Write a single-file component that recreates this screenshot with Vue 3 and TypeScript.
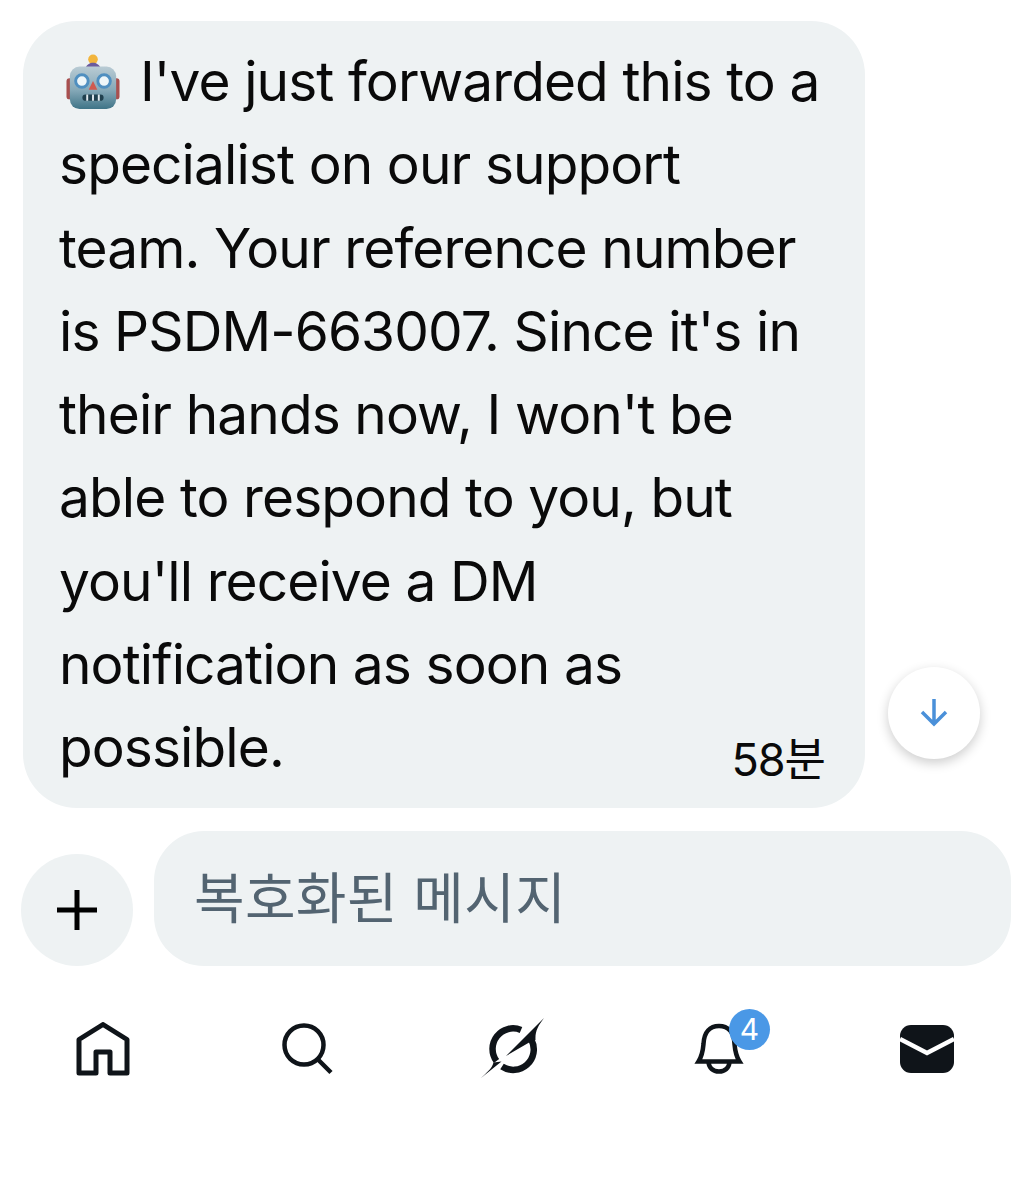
<template>
  <div class="screen">
    <div class="thread">
      <div class="bubble">
        <div class="line first">
          <svg class="robot" viewBox="0 0 56 58" aria-hidden="true">
            <defs>
              <linearGradient id="face" x1="0" y1="0" x2="0" y2="1">
                <stop offset="0" stop-color="#b9cbd4" />
                <stop offset="0.55" stop-color="#86a9b8" />
                <stop offset="1" stop-color="#3f7487" />
              </linearGradient>
            </defs>
            <rect x="0.500" y="25" width="7" height="22" rx="3" fill="#a8504f" />
            <rect x="48.500" y="25" width="7" height="22" rx="3" fill="#a8504f" />
            <circle cx="28" cy="5.500" r="5" fill="#f2b53c" />
            <path d="M20 15c1-4 5-6 8-6s7 2 8 6z" fill="#6a5a9c" />
            <rect x="4" y="13" width="48" height="44" rx="10" fill="url(#face)" />
            <circle cx="16.500" cy="28" r="6.500" fill="#eef6f9" stroke="#4f8fc0" stroke-width="3" />
            <circle cx="39.500" cy="28" r="6.500" fill="#eef6f9" stroke="#4f8fc0" stroke-width="3" />
            <path d="M28 28l4.500 9h-9z" fill="#cf5a50" />
            <rect x="17" y="42" width="22" height="6.500" rx="3.200" fill="#20404e" />
            <path d="M22 42v6.500M28 42v6.500M34 42v6.500" stroke="#dfe9ee" stroke-width="2" />
          </svg>
          <span>{{ firstLine }}</span>
        </div>
        <div v-for="text in lines" :key="text" class="line">{{ text }}</div>
        <div class="line last">
          <span>possible.</span>
          <span class="time">58분</span>
        </div>
      </div>
      <button class="scroll-down" aria-label="scroll down">
        <svg viewBox="0 0 28 30" width="28" height="30" fill="none" stroke="#4a90d9" stroke-width="3.500">
          <path d="M14 1v25M2 14l12 12 12-12" />
        </svg>
      </button>
    </div>

    <div class="composer">
      <button class="add" aria-label="add">
        <svg viewBox="0 0 42 42" width="42" height="42" stroke="#000" stroke-width="5">
          <path d="M21 1v40M1 21h40" />
        </svg>
      </button>
      <div class="input">복호화된 메시지</div>
    </div>

    <nav class="tabs">
      <a class="tab">
        <svg viewBox="0 0 54 54" width="54" height="54" fill="none" stroke="#0f1419" stroke-width="5" stroke-linejoin="round">
          <path d="M3 17.500 27 2.500l24 15V51H34V30H20v21H3z" />
        </svg>
      </a>
      <a class="tab">
        <svg class="nudge" viewBox="0 0 54 54" width="54" height="54" fill="none" stroke="#0f1419" stroke-width="4.500">
          <circle cx="24" cy="23" r="19.500" />
          <path d="M37 36.500l14 14" />
        </svg>
      </a>
      <a class="tab">
        <svg class="nudge" viewBox="0 0 66 66" width="66" height="66">
          <g fill="none" stroke="#0f1419" stroke-width="6.500">
            <path d="M41 14A20.500 20.500 0 0 0 16.500 45" />
            <path d="M22 50.500A20.500 20.500 0 0 0 51.500 24" />
          </g>
          <g fill="#0f1419">
            <path d="M64 2C58 10 55 15 55.500 24L50 26 26 40z" />
            <path d="M1 62C6 57 12 53 13.500 46.500L21.500 45.500z" />
          </g>
        </svg>
      </a>
      <a class="tab">
        <svg class="nudge" viewBox="0 0 50 54" width="50" height="54" fill="none" stroke="#0f1419" stroke-width="4.500">
          <path d="M4.500 39.500C8 34 9 28 9.500 22 10 10 16 4 25 4s15 6 15.500 18c.5 6 1.500 12 5 17.500z" />
          <path d="M14.500 40c.5 6 4.500 9.500 10.500 9.500S35 46 35.500 40" />
        </svg>
        <span class="badge">4</span>
      </a>
      <a class="tab">
        <svg viewBox="0 0 54 48" width="54" height="48">
          <rect width="54" height="48" rx="11" fill="#0f1419" />
          <path d="M0 14l27 14 27-14" fill="none" stroke="#fff" stroke-width="4.500" />
        </svg>
      </a>
    </nav>
  </div>
</template>

<script setup lang="ts">
const firstLine = "I've just forwarded this to a"

const lines: string[] = [
  'specialist on our support',
  'team. Your reference number',
  "is PSDM-663007. Since it's in",
  "their hands now, I won't be",
  'able to respond to you, but',
  "you'll receive a DM",
  'notification as soon as',
]
</script>

<style>
html,
body {
  background: #fff;
}
</style>

<style scoped>
.screen {
  width: 1032px;
  height: 1200px;
  overflow: hidden;
  font-family: Inter, "Liberation Sans", "Noto Sans CJK KR", sans-serif;
  color: #0a0a0a;
  background: #fff;
}
.thread {
  position: relative;
  padding: 21px 0 0 23px;
}
.bubble {
  width: 842px;
  height: 787px;
  box-sizing: border-box;
  padding: 19px 40px 0 36px;
  border-radius: 54px;
  background: #eef2f3;
}
.line {
  height: 83.3px;
  line-height: 83.3px;
  font-size: 55px;
  letter-spacing: -0.9px;
  white-space: nowrap;
}
.first {
  display: flex;
  align-items: center;
  gap: 20px;
}
.robot {
  width: 54px;
  height: 58px;
  margin-left: 7px;
  flex: none;
}
.last {
  display: flex;
  justify-content: space-between;
}
.time {
  margin-top: 12px;
  font-size: 45px;
  letter-spacing: -1px;
}
.scroll-down {
  position: absolute;
  left: 888px;
  top: 667px;
  width: 92px;
  height: 92px;
  padding: 0;
  border: none;
  border-radius: 50%;
  background: #fff;
  box-shadow: 0 4px 12px rgba(0, 0, 0, 0.2);
  display: flex;
  align-items: center;
  justify-content: center;
}
.composer {
  display: flex;
  align-items: flex-end;
  gap: 21px;
  padding: 23px 21px 0 21px;
}
.add {
  width: 112px;
  height: 112px;
  flex: none;
  padding: 0;
  border: none;
  border-radius: 50%;
  background: #eef2f3;
  display: flex;
  align-items: center;
  justify-content: center;
}
.input {
  flex: 1;
  height: 135px;
  box-sizing: border-box;
  padding: 0 0 9px 40px;
  border-radius: 50px;
  background: #eef2f3;
  color: #536471;
  font-size: 55px;
  letter-spacing: 0.3px;
  display: flex;
  align-items: center;
}
.tabs {
  display: grid;
  grid-template-columns: repeat(5, 1fr);
  padding: 50px 0 0 0;
  width: 1030px;
}
.tab {
  position: relative;
  height: 66px;
  display: flex;
  align-items: center;
  justify-content: center;
}
.nudge {
  margin-right: 4px;
}
.badge {
  position: absolute;
  left: 111px;
  top: -7px;
  width: 41px;
  height: 41px;
  border-radius: 50%;
  background: #4a98e6;
  color: #fff;
  font-size: 30px;
  line-height: 41px;
  text-align: center;
}
</style>
